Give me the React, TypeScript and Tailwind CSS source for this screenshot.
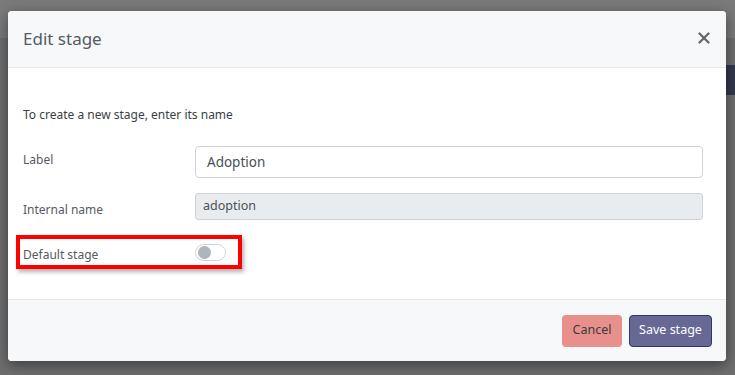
export default function App() {
  return (
    <div
      className="relative w-[735px] h-[375px] overflow-hidden bg-[#6e6e6e]"
      style={{ fontFamily: '"Noto Sans", "Open Sans", sans-serif' }}
    >
      {/* dimmed page behind the overlay */}
      <div className="absolute left-0 top-0 w-full h-[38px] bg-[#7a7a7a]" />
      <div className="absolute right-0 top-[65px] w-[20px] h-[30px] bg-[#34374d]" />

      <div className="relative pt-[11px] pl-[8px]">
        <div className="w-[718px] h-[350px] flex flex-col rounded-[4px] overflow-hidden bg-white shadow-[0_4px_14px_rgba(0,0,0,0.45)]">
          {/* Header */}
          <div className="h-[57px] shrink-0 flex items-center justify-between pl-[15px] pr-[16px] bg-[#f7f8fa] border-b border-[#e3e6ea]">
            <h2 className="text-[17px] text-[#555b62] font-normal">Edit stage</h2>
            <svg width="12" height="12" viewBox="0 0 12 12" className="mt-[-2px]">
              <path d="M1.5 1.5 L10.5 10.5 M10.5 1.5 L1.5 10.5" stroke="#666" strokeWidth="2.3" strokeLinecap="round" />
            </svg>
          </div>

          {/* Body */}
          <div className="flex-1 px-[15px] pt-[38px]">
            <p className="text-[12px] leading-[18px] text-[#3a3f45]">To create a new stage, enter its name</p>

            <div className="mt-[22px] flex items-start">
              <label className="w-[172px] pt-[5px] text-[12px] leading-[18px] text-[#555b62]">Label</label>
              <div className="w-[508px] h-[32px] flex items-center px-[11px] border border-[#ced4da] rounded-[4px] bg-white text-[13.5px] text-[#495057]">
                Adoption
              </div>
            </div>

            <div className="mt-[15px] flex items-start">
              <label className="w-[172px] pt-[8px] text-[12px] leading-[18px] text-[#555b62]">Internal name</label>
              <div className="w-[508px] h-[27px] flex items-center px-[7px] border border-[#ced4da] rounded-[3px] bg-[#e9ecef] text-[12.5px] text-[#495057]">
                adoption
              </div>
            </div>

            <div className="mt-[15px] ml-[-7px] w-[226px] h-[34px] flex items-center pl-[3px] border-[4px] border-[#ff0000] shadow-[2px_3px_4px_rgba(0,0,0,0.3)]">
              <span className="w-[172px] pt-[6px] text-[12px] leading-[18px] text-[#555b62]">Default stage</span>
              <div className="w-[31px] h-[17px] rounded-full border border-[#ced4da] bg-white flex items-center pl-[2px]">
                <div className="w-[13px] h-[13px] rounded-full bg-[#adb5bd]" />
              </div>
            </div>
          </div>

          {/* Footer */}
          <div className="h-[62px] shrink-0 flex items-center justify-end gap-[7px] pr-[14px] bg-[#f7f8fa] border-t border-[#e3e6ea]">
            <button className="w-[60px] h-[32px] rounded-[4px] bg-[#e8918c] text-[12.5px] text-[#3a3a3a]">Cancel</button>
            <button className="w-[83px] h-[32px] rounded-[4px] bg-[#676893] border border-[#30356f] text-[12.5px] text-white">Save stage</button>
          </div>
        </div>
      </div>
    </div>
  );
}
